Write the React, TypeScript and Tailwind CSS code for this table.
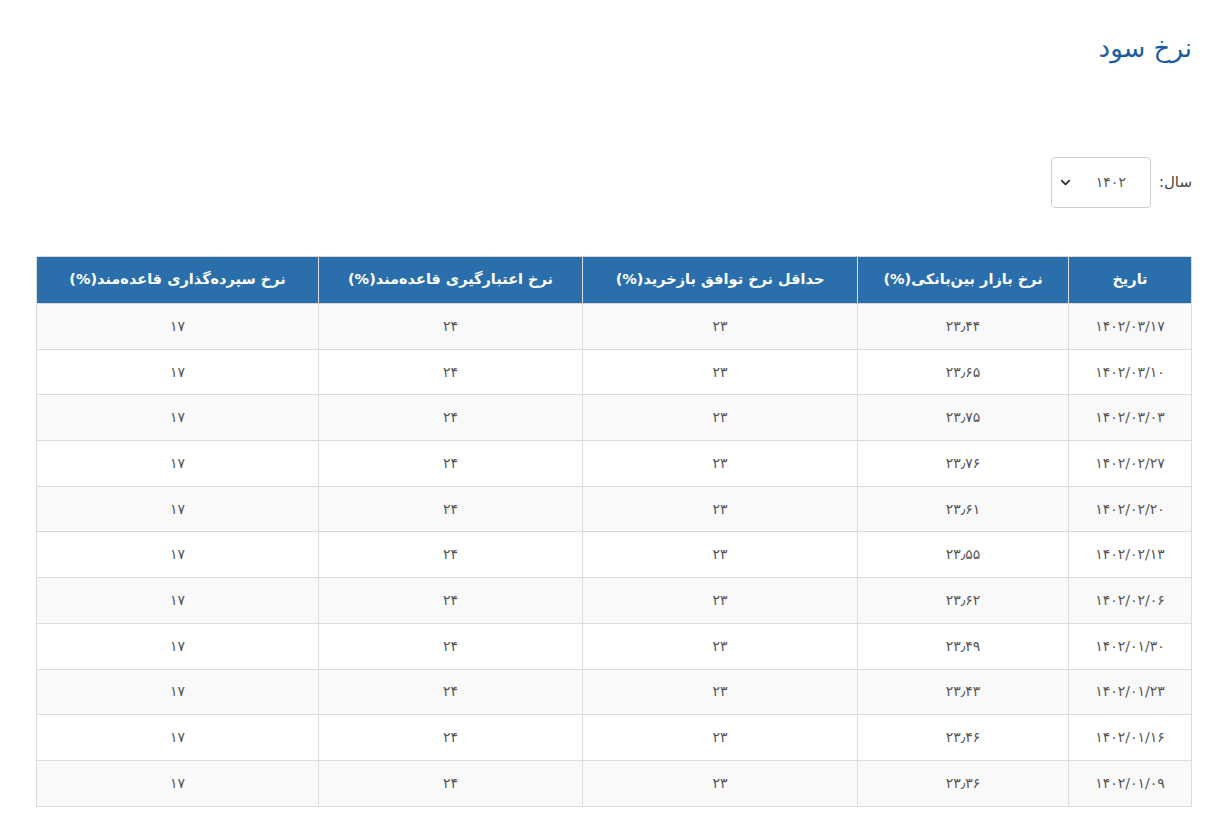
import { ChevronDown } from 'lucide-react';

const FONT = { fontFamily: '"DejaVu Sans", "Noto Sans", sans-serif' };

const toFa = (s: string) => s.replace(/\d/g, (d) => '۰۱۲۳۴۵۶۷۸۹'[Number(d)]).replace('.', '٫');

const ROWS = [
  ['1402/03/17', '23.44'],
  ['1402/03/10', '23.65'],
  ['1402/03/03', '23.75'],
  ['1402/02/27', '23.76'],
  ['1402/02/20', '23.61'],
  ['1402/02/13', '23.55'],
  ['1402/02/06', '23.62'],
  ['1402/01/30', '23.49'],
  ['1402/01/23', '23.43'],
  ['1402/01/16', '23.46'],
  ['1402/01/09', '23.36'],
];

const HEADERS = [
  { label: 'تاریخ', w: 'w-[123px]' },
  { label: 'نرخ بازار بین‌بانکی(%)', w: 'w-[211px]' },
  { label: 'حداقل نرخ توافق بازخرید(%)', w: 'w-[275px]' },
  { label: 'نرخ اعتبارگیری قاعده‌مند(%)', w: 'w-[264px]' },
  { label: 'نرخ سپرده‌گذاری قاعده‌مند(%)', w: '' },
];

export default function App() {
  return (
    <div dir="rtl" className="min-h-[822px] bg-white pl-[36px] pr-[26px] pt-[30px]" style={FONT}>
      <h1 className="text-[26px] leading-[36px] text-[#1d5d9f]">نرخ سود</h1>

      <div className="mt-[91px] flex items-center gap-[8px]">
        <span className="text-[15px] text-[#444]">سال:</span>
        <div className="flex h-[51px] w-[100px] items-center justify-between rounded-[4px] border border-[#cfcfcf] bg-white pl-[6px] pr-[24px]">
          <span className="text-[14px] text-[#555]">{toFa('1402')}</span>
          <ChevronDown size={15} strokeWidth={3} className="text-[#333]" />
        </div>
      </div>

      <table className="mt-[48px] w-full border-collapse text-center">
        <thead>
          <tr className="h-[47px] bg-[#2a6fab] text-white">
            {HEADERS.map((h) => (
              <th key={h.label} className={`${h.w} border border-[#dcdcdc] text-[14.5px] font-bold`}>
                {h.label}
              </th>
            ))}
          </tr>
        </thead>
        <tbody>
          {ROWS.map(([date, rate], i) => (
            <tr key={date} className={`h-[45.7px] text-[14px] text-[#555] ${i % 2 === 0 ? 'bg-[#f9f9f9]' : 'bg-white'}`}>
              <td className="border border-[#dcdcdc]">{toFa(date)}</td>
              <td className="border border-[#dcdcdc]">{toFa(rate)}</td>
              <td className="border border-[#dcdcdc]">{toFa('23')}</td>
              <td className="border border-[#dcdcdc]">{toFa('24')}</td>
              <td className="border border-[#dcdcdc]">{toFa('17')}</td>
            </tr>
          ))}
        </tbody>
      </table>
    </div>
  );
}
